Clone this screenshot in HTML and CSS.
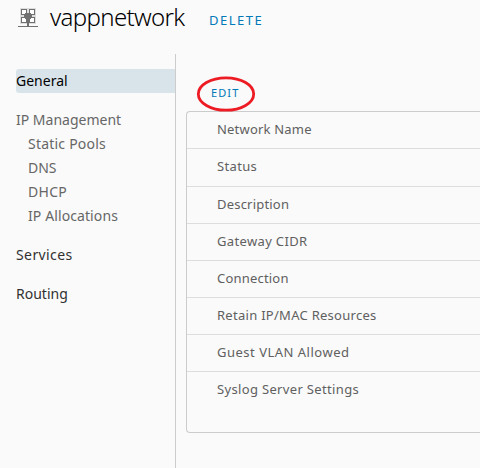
FILE: index.html
```html
<!DOCTYPE html>
<html lang="en">
<head>
<meta charset="utf-8">
<title>vappnetwork</title>
<link rel="stylesheet" href="styles.css">
</head>
<body>
<header class="header">
  <svg class="network-icon" width="20" height="20" viewBox="0 0 20 20">
    <path fill="#dedede" d="M2 0h16v16H2z"/>
    <path fill="#707070" d="M3 1h14v14H3zM9 14h2v4H9zM0 18h20v1H0z"/>
    <path fill="#dedede" d="M9 1h2v4H9zM3 7h3v2H3zM14 7h3v2h-3zM9 11h2v4H9z"/>
    <path fill="#707070" d="M9 11h2v7H9z"/>
    <path fill="#fff" d="M4 2h4v3H7v1H4zM12 2h4v4h-3V5h-1zM4 10h3v1h1v3H4zM13 10h3v4h-4v-3h1z"/>
  </svg>
  <h1 class="title">vappnetwork</h1>
  <a class="action delete">DELETE</a>
</header>
<div class="layout">
  <nav class="sidebar">
    <a class="nav-item active">General</a>
    <section class="group">
      <a class="nav-item muted">IP Management</a>
      <a class="nav-item child"><span class="pools">Static Pools</span></a>
      <a class="nav-item child">DNS</a>
      <a class="nav-item child"><span class="dhcp">DHCP</span></a>
      <a class="nav-item child"><span class="allocations">IP Allocations</span></a>
    </section>
    <a class="nav-item"><span class="services">Services</span></a>
    <a class="nav-item">Routing</a>
  </nav>
  <main class="content">
    <div class="toolbar"><a class="action edit">EDIT<svg class="ring" width="60" height="38" viewBox="0 0 60 38"><ellipse cx="30" cy="19" rx="27.7" ry="16.2"/></svg></a></div>
    <div class="card">
      <div class="row name">Network Name</div>
      <div class="row tall">Status</div>
      <div class="row description">Description</div>
      <div class="row gateway">Gateway CIDR</div>
      <div class="row description">Connection</div>
      <div class="row retain">Retain IP/MAC Resources</div>
      <div class="row guest">Guest VLAN Allowed</div>
      <div class="row">Syslog Server Settings</div>
    </div>
  </main>
</div>
</body>
</html>
```
FILE: styles.css
```css
* { box-sizing: border-box; }
body { margin: 0; width: 480px; height: 468px; overflow: hidden; background: #fafafa; color: #313131; font: 14px/24px "Noto Sans", sans-serif; }
.header { display: flex; height: 54px; padding: 8px 0 0 18px; }
.network-icon { flex: none; }
.title { margin: -9px 0 0 12px; width: 136px; font-size: 24px; line-height: 36px; font-weight: 300; color: #000; letter-spacing: -.65px; }
.action { color: #0079b8; font-size: 12px; letter-spacing: 1px; }
.delete { margin-left: 23px; font-size: 13px; letter-spacing: 1.5px; }
.layout { display: flex; height: 414px; }
.sidebar { flex: none; width: 176px; padding: 15px 0 0 16px; border-right: 1px solid #ccc; }
.nav-item { display: block; height: 24px; margin-bottom: 15px; white-space: nowrap; }
.active { background: #d9e4ea; color: #000; border-radius: 3px 0 0 3px; }
.group { margin-bottom: 15px; }
.group .nav-item { margin: 0; }
.muted { color: #666; }
.child { padding-left: 12px; color: #666; }
.pools { letter-spacing: .22px; }
.dhcp { letter-spacing: .3px; }
.allocations { letter-spacing: .1px; }
.services { letter-spacing: .4px; }
.content { flex: 1; min-width: 0; padding: 27px 0 0 10px; }
.toolbar { height: 30px; padding-left: 25px; }
.edit { position: relative; top: -1px; display: inline-block; font-size: 11px; letter-spacing: 1.1px; }
.ring { position: absolute; left: -15px; top: -6px; fill: none; stroke: #ed1c24; stroke-width: 2.8; }
.card { height: 322px; border: 1px solid #ccc; border-right: 0; border-radius: 4px 0 0 4px; }
.row { height: 37px; padding-left: 30px; border-bottom: 1px solid #ddd; color: #606060; font-size: 13px; line-height: 34px; letter-spacing: .34px; white-space: nowrap; }
.name { letter-spacing: .2px; }
.description { letter-spacing: .2px; }
.gateway { letter-spacing: .35px; }
.retain { letter-spacing: .28px; }
.guest { letter-spacing: .5px; }
.tall { height: 38px; }
.row:last-child { border-bottom: 0; }
```
